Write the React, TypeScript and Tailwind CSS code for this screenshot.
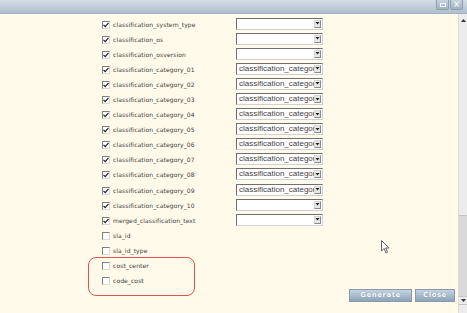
import React from 'react';

interface Field {
  name: string;
  checked: boolean;
  value?: string;
  select: boolean;
}

// the select shows its value cut off by the arrow button
const cat = 'classification_categor';

const fields: Field[] = [
  { name: 'classification_system_type', checked: true, select: true },
  { name: 'classification_os', checked: true, select: true },
  { name: 'classification_osversion', checked: true, select: true },
  { name: 'classification_category_01', checked: true, select: true, value: cat },
  { name: 'classification_category_02', checked: true, select: true, value: cat },
  { name: 'classification_category_03', checked: true, select: true, value: cat },
  { name: 'classification_category_04', checked: true, select: true, value: cat },
  { name: 'classification_category_05', checked: true, select: true, value: cat },
  { name: 'classification_category_06', checked: true, select: true, value: cat },
  { name: 'classification_category_07', checked: true, select: true, value: cat },
  { name: 'classification_category_08', checked: true, select: true, value: cat },
  { name: 'classification_category_09', checked: true, select: true, value: cat },
  { name: 'classification_category_10', checked: true, select: true },
  { name: 'merged_classification_text', checked: true, select: true },
  { name: 'sla_id', checked: false, select: false },
  { name: 'sla_id_type', checked: false, select: false },
  { name: 'cost_center', checked: false, select: false },
  { name: 'code_cost', checked: false, select: false }
];

function Checkbox({ checked }: { checked: boolean }) {
  return (
    <span className="flex h-[8px] w-[8px] shrink-0 items-center justify-center border border-t-[#808080] border-l-[#808080] border-b-[#dadada] border-r-[#dadada] bg-white">
      {checked && (
        <svg width="6" height="6" viewBox="0 0 6 6">
          <path d="M0.5 2.8 L2.2 4.6 L5.5 0.8" stroke="#222" strokeWidth="1.2" fill="none" />
        </svg>
      )}
    </span>
  );
}

function Select({ value }: { value?: string }) {
  return (
    <div className="relative mt-[-2px] flex h-[12px] w-[87px] items-center border border-t-[#6f6f6f] border-l-[#6f6f6f] border-b-[#d0d0d0] border-r-[#d0d0d0] bg-white">
      <span className="ml-[2px] whitespace-nowrap font-['Liberation_Sans',sans-serif] text-[8px] leading-none text-[#444]">
        {value}
      </span>
      {/* dropdown arrow */}
      <span className="absolute right-[1px] top-[1px] flex h-[8px] w-[7px] items-center justify-center border border-t-[#d8d8d8] border-l-[#d8d8d8] border-b-[#8a8a8a] border-r-[#8a8a8a] bg-[#e6e6e6]">
        <svg width="5" height="3" viewBox="0 0 5 3">
          <path d="M0.5 0 H4.5 L2.5 2.5 Z" fill="#222" />
        </svg>
      </span>
    </div>
  );
}

export default function App() {
  return (
    <div className="relative flex h-[313px] w-[467px] flex-col overflow-hidden bg-[#fffae9] font-['DejaVu_Sans',sans-serif]">
      {/* Title bar */}
      <div className="flex h-[14px] shrink-0 items-start justify-end gap-[1px] border-b border-[#a3b3c3] bg-gradient-to-b from-[#d5dde6] to-[#b0bfcd] pr-[4px]">
        <span className="flex h-[10px] w-[13px] items-center justify-center rounded-b-[2px] border border-t-0 border-[#8c9db0] bg-gradient-to-b from-[#c8d3de] to-[#a3b4c6]">
          <span className="h-[4px] w-[6px] border border-[#f4f7fa]" />
        </span>
        <span className="flex h-[10px] w-[13px] items-center justify-center rounded-b-[2px] border border-t-0 border-[#8c9db0] bg-gradient-to-b from-[#c8d3de] to-[#a3b4c6] text-[8px] leading-none font-bold text-[#f4f7fa]">
          ×
        </span>
      </div>

      <div className="flex flex-1">
        {/* Form */}
        <div className="flex flex-1 flex-col pt-[3px] pl-[102px]">
          {fields.map((f) => (
            <div key={f.name} className="flex h-[15.1px] items-center">
              <div className="flex w-[134px] items-center gap-[3px]">
                <Checkbox checked={f.checked} />
                <span className="whitespace-nowrap text-[6px] leading-none tracking-[0.1px] text-[#3c3c3c]">{f.name}</span>
              </div>
              {f.select && <Select value={f.value} />}
            </div>
          ))}

          <div className="mt-[0px] flex justify-end gap-[3px] pr-[3px]">
            <button className="h-[13px] w-[63px] border border-[#8699ad] bg-gradient-to-b from-[#c6d4e1] to-[#8ea4ba] text-[7px] leading-none font-bold tracking-[0.5px] text-white [text-shadow:0_0_1px_#5f7388]">
              Generate
            </button>
            <button className="h-[13px] w-[40px] border border-[#8699ad] bg-gradient-to-b from-[#c6d4e1] to-[#8ea4ba] text-[7px] leading-none font-bold tracking-[0.5px] text-white [text-shadow:0_0_1px_#5f7388]">
              Close
            </button>
          </div>
        </div>

        {/* Scrollbar */}
        <div className="flex w-[9px] flex-col border-l border-[#dcdcdc] bg-[#ececec]">
          <span className="mt-[2px] flex h-[8px] items-center justify-center">
            <svg width="5" height="3" viewBox="0 0 5 3">
              <path d="M0 3 H5 L2.5 0 Z" fill="#333" />
            </svg>
          </span>
          <div className="flex-1" />
          <div className="h-[82px] border-y border-[#c4c4c4] bg-[#d9d9d9]" />
          <span className="flex h-[8px] items-center justify-center border-b border-[#c4c4c4]">
            <svg width="5" height="3" viewBox="0 0 5 3">
              <path d="M0 0 H5 L2.5 3 Z" fill="#333" />
            </svg>
          </span>
          <div className="h-[8px]" />
        </div>
      </div>

      {/* Highlight annotation */}
      <div className="absolute left-[88px] top-[257px] h-[39px] w-[107px] rounded-[8px] border border-[#e2534f]" />

      {/* Mouse cursor */}
      <svg className="absolute left-[381px] top-[240px]" width="10" height="15" viewBox="0 0 10 15">
        <path d="M0.5 0.5 L0.5 11 L3 8.5 L5 13 L6.5 12.3 L4.6 8 L8 8 Z" fill="#fff" stroke="#555" strokeWidth="0.9" />
      </svg>
    </div>
  );
}
